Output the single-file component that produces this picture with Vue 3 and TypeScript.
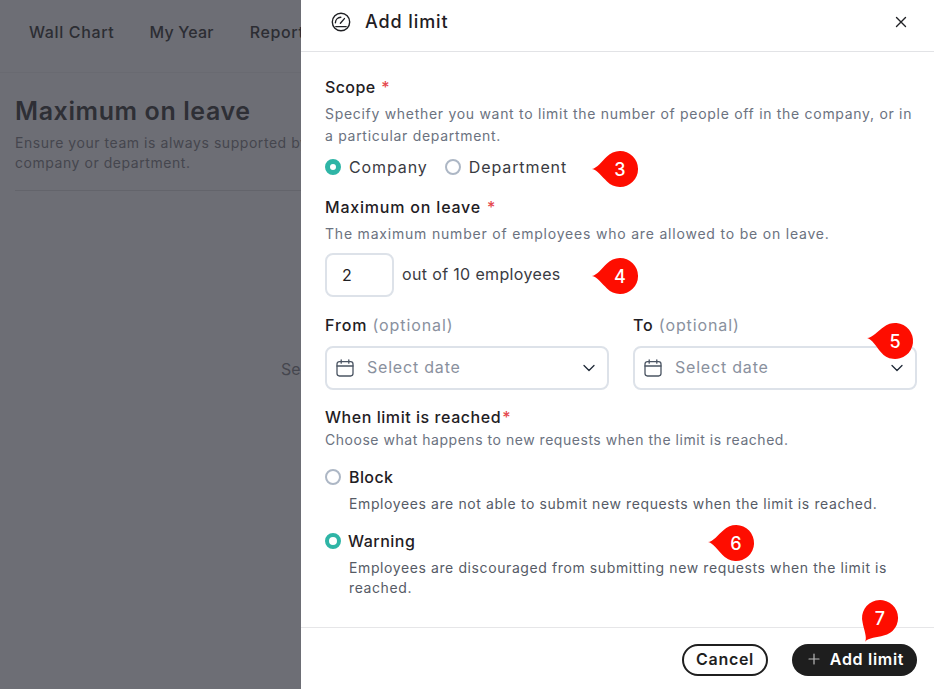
<script setup lang="ts">
interface Badge {
  label: number;
  x: number;
  y: number;
  angle: number;
}

const badges: Badge[] = [
  { label: 3, x: 620, y: 169, angle: 0 },
  { label: 4, x: 620, y: 276, angle: 0 },
  { label: 5, x: 895, y: 341, angle: 6 },
  { label: 6, x: 736, y: 543, angle: 2 },
  { label: 7, x: 880, y: 618, angle: -58 },
];
</script>

<template>
  <div class="page">
    <aside class="backdrop">
      <nav class="tabs">
        <span>Wall Chart</span>
        <span class="tab-year">My Year</span>
        <span>Reports</span>
      </nav>
      <div class="back-content">
        <h1>Maximum on leave</h1>
        <p class="back-sub">Ensure your team is always supported by<br>company or department.</p>
        <div class="back-rule"></div>
        <p class="back-empty">Se</p>
      </div>
    </aside>

    <section class="drawer">
      <header class="drawer-head">
        <svg class="gauge" viewBox="0 0 20 20" width="20" height="20" fill="none" stroke="#1f2024" stroke-width="1.4" stroke-linecap="round">
          <circle cx="10" cy="10" r="8.7" />
          <path d="M4.8 14.6h10.4" />
          <path d="M9.4 11.2 13.4 6.6" />
          <path d="M4.4 10.8a5.7 5.7 0 0 1 5.4-5.6" />
        </svg>
        <h2>Add limit</h2>
        <svg class="close" viewBox="0 0 12 12" width="12" height="12" fill="none" stroke="#1f2024" stroke-width="1.4" stroke-linecap="round">
          <path d="M1.5 1.5l9 9M10.5 1.5l-9 9" />
        </svg>
      </header>

      <div class="drawer-body">
        <label class="label">Scope <i>*</i></label>
        <p class="hint scope-hint">Specify whether you want to limit the number of people off in the company, or in a particular department.</p>
        <div class="radio-row">
          <span class="radio on"></span><span class="radio-text">Company</span>
          <span class="radio"></span><span class="radio-text">Department</span>
        </div>

        <label class="label max-label">Maximum on leave <i>*</i></label>
        <p class="hint">The maximum number of employees who are allowed to be on leave.</p>
        <div class="count-row">
          <div class="count">2</div>
          <span>out of 10 employees</span>
        </div>

        <div class="dates">
          <div v-for="name in ['From', 'To']" :key="name" class="date-field">
            <label class="label date-label">{{ name }} <em>(optional)</em></label>
            <div class="select">
              <svg viewBox="0 0 20 20" width="20" height="20" fill="none" stroke="#4b5563" stroke-width="1.3" stroke-linecap="round" stroke-linejoin="round">
                <rect x="2" y="3.6" width="16" height="14.4" rx="2.4" />
                <path d="M2 8h16M6.2 1.8v3.4M13.8 1.8v3.4" />
              </svg>
              <span class="placeholder">Select date</span>
              <svg class="chevron" viewBox="0 0 12 8" width="12" height="8" fill="none" stroke="#1f2937" stroke-width="1.3" stroke-linecap="round" stroke-linejoin="round">
                <path d="M1 1.5l5 5 5-5" />
              </svg>
            </div>
          </div>
        </div>

        <label class="label reach-label">When limit is reached<i>*</i></label>
        <p class="hint reach-hint">Choose what happens to new requests when the limit is reached.</p>

        <div class="option">
          <span class="radio"></span><span class="option-name">Block</span>
        </div>
        <p class="option-text">Employees are not able to submit new requests when the limit is reached.</p>
        <div class="option option-warning">
          <span class="radio on"></span><span class="option-name">Warning</span>
        </div>
        <p class="option-text">Employees are discouraged from submitting new requests when the limit is reached.</p>
      </div>

      <footer class="drawer-foot">
        <button class="btn-cancel">Cancel</button>
        <button class="btn-add">
          <svg viewBox="0 0 12 12" width="12" height="12" fill="none" stroke="#b8b8b8" stroke-width="1.2" stroke-linecap="round">
            <path d="M6 1v10M1 6h10" />
          </svg>
          Add limit
        </button>
      </footer>
    </section>

    <svg
      v-for="b in badges"
      :key="b.label"
      class="badge"
      viewBox="-30 -20 50 40"
      width="50"
      height="40"
      :style="{ left: `${b.x - 30}px`, top: `${b.y - 20}px` }"
    >
      <path
        d="M-28 0 C-23 -0.5 -18 -8 -13 -12.4 A18 18 0 1 1 -13 12.4 C-18 8 -23 0.5 -28 0 Z"
        fill="#fe0d00"
        :transform="`rotate(${b.angle})`"
      />
      <text x="0" y="7" text-anchor="middle" class="badge-num">{{ b.label }}</text>
    </svg>
  </div>
</template>

<style>
html, body { margin: 0; background: #fff; }
</style>

<style scoped>
.page {
  position: relative;
  display: flex;
  width: 934px;
  height: 689px;
  overflow: hidden;
  font-family: Inter, "Open Sans", sans-serif;
  color: #1f2024;
}
.backdrop {
  width: 301px;
  flex: none;
  overflow: hidden;
  background: #6d6e75;
  color: #2c2d33;
}
.tabs {
  display: flex;
  gap: 35px;
  height: 73px;
  box-sizing: border-box;
  padding: 22px 0 0 29px;
  border-bottom: 1px solid #696a71;
  font-size: 16px;
  font-weight: 500;
  letter-spacing: 0.65px;
  white-space: nowrap;
  line-height: 20px;
}
.tab-year { letter-spacing: 0.2px; margin-right: 1px; }
.back-content { padding: 23px 0 0 15px; width: 286px; }
.back-content h1 {
  margin: 0;
  font-size: 25px;
  line-height: 30px;
  font-weight: 600;
  letter-spacing: 0.6px;
  white-space: nowrap;
  color: #2e2f35;
}
.back-sub {
  margin: 7px 0 0;
  font-size: 14px;
  line-height: 20px;
  letter-spacing: 0.55px;
  white-space: nowrap;
  color: #45464e;
}
.back-rule {
  margin-top: 17px;
  height: 1px;
  background: #63646b;
}
.back-empty {
  margin: 168px 0 0 266px;
  font-size: 16px;
  line-height: 20px;
  color: #45464e;
}
.drawer {
  flex: 1;
  display: flex;
  flex-direction: column;
  background: #fff;
}
.drawer-head {
  display: flex;
  align-items: center;
  box-sizing: border-box;
  padding: 0 27px 8px 30px;
  border-bottom: 1px solid #e2e3e6;
  flex: none;
  height: 52px;
}
.drawer-head h2 {
  margin: 0 0 0 14px;
  font-size: 18px;
  font-weight: 500;
  letter-spacing: 0.9px;
}
.close { margin-left: auto; }
.drawer-body {
  flex: 1;
  padding: 25px 17px 0 24px;
}
.label {
  display: block;
  font-size: 16px;
  line-height: 20px;
  font-weight: 500;
  letter-spacing: 0.4px;
}
.label i { font-style: normal; color: #e5484d; margin-left: 1px; }
.label em { font-style: normal; font-weight: 400; color: #8a919e; }
.hint {
  margin: 6px 0 0;
  font-size: 14px;
  line-height: 22px;
  letter-spacing: 0.8px;
  color: #6b7280;
}
.scope-hint { letter-spacing: 0.7px; }
.radio-row {
  display: flex;
  align-items: center;
  margin-top: 9px;
  height: 22px;
  font-size: 16px;
  letter-spacing: 0.9px;
  color: #3a3b42;
}
.radio {
  box-sizing: border-box;
  width: 16px;
  height: 16px;
  flex: none;
  border-radius: 50%;
  border: 2px solid #adb7c5;
  background: #fff;
}
.radio.on { border: 5px solid #2fb5a6; }
.radio-text { margin: 0 17px 0 8px; }
.max-label { margin-top: 19px; letter-spacing: 0.8px; }
.count-row {
  display: flex;
  align-items: center;
  gap: 8px;
  margin-top: 8px;
  font-size: 16px;
  letter-spacing: 0.35px;
  color: #3a3b42;
}
.count-row span { padding-bottom: 2px; }
.count {
  box-sizing: border-box;
  width: 69px;
  height: 44px;
  padding-left: 15px;
  border: 2px solid #dde2e9;
  border-radius: 8px;
  line-height: 40px;
  color: #1f2024;
}
.dates {
  display: grid;
  grid-template-columns: 284px 284px;
  gap: 24px;
  margin-top: 17px;
}
.date-label { line-height: 22px; letter-spacing: 0.9px; }
.select {
  display: flex;
  align-items: center;
  box-sizing: border-box;
  height: 44px;
  margin-top: 10px;
  padding: 0 12px 0 8px;
  border: 2px solid #dde2e9;
  border-radius: 8px;
}
.placeholder {
  margin-left: 12px;
  font-size: 16px;
  letter-spacing: 0.8px;
  line-height: 20px;
  padding-bottom: 3px;
  color: #8a919e;
}
.chevron { margin-left: auto; }
.reach-label { margin-top: 17px; letter-spacing: 0.55px; }
.reach-hint { margin-top: 2px; letter-spacing: 0.53px; }
.option {
  display: flex;
  align-items: center;
  gap: 8px;
  margin-top: 15px;
  height: 22px;
  font-size: 16px;
  letter-spacing: 0.4px;
  font-weight: 500;
}
.option-warning { margin-top: 16px; gap: 7px; letter-spacing: 0.5px; }
.option-warning .radio.on { border-width: 4px; }
.option-name { font-weight: 500; }
.option-text {
  margin: 6px 0 0 24px;
  font-size: 14px;
  line-height: 20px;
  letter-spacing: 0.6px;
  color: #565b66;
}
.drawer-foot {
  display: flex;
  justify-content: flex-end;
  align-items: flex-start;
  gap: 24px;
  height: 62px;
  flex: none;
  box-sizing: border-box;
  padding: 16px 17px 0 0;
  border-top: 1px solid #e6e6e8;
}
.drawer-foot button {
  height: 32px;
  border-radius: 16px;
  font: inherit;
  font-size: 16px;
  font-weight: 600;
  letter-spacing: 0.7px;
  padding: 0 0 2px;
}
.drawer-foot .btn-add { padding-left: 3px; }
.btn-cancel {
  width: 86px;
  background: #fff;
  border: 2px solid #1f1f1f;
  color: #1f1f1f;
}
.btn-add {
  display: flex;
  align-items: center;
  justify-content: center;
  gap: 10px;
  width: 125px;
  background: #1e1e1e;
  border: none;
  color: #fff;
}
.badge {
  position: absolute;
  overflow: visible;
}
.badge-num {
  font-family: Inter, sans-serif;
  font-size: 18px;
  font-weight: 500;
  fill: #fff;
}
</style>
